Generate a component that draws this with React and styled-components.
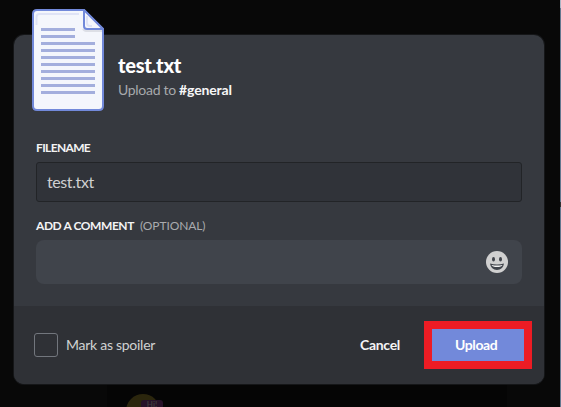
import React from "react";
import styled, { createGlobalStyle } from "styled-components";

const Global = createGlobalStyle`
  * { box-sizing: border-box; }
  body { margin: 0; background: #080808; font-family: Lato, "Noto Sans", sans-serif; }
  button { font-family: inherit; }
`;

const Screen = styled.main`
  position: relative;
  width: 561px;
  height: 407px;
  overflow: hidden;
  padding: 35px 0 0 14px;
  background: #080808;
`;

const WindowEdge = styled.div`
  position: absolute;
  right: 0;
  top: 0;
  width: 1px;
  height: 407px;
  background: linear-gradient(#a9b4c4 0 8px, #64788f 8px 202px, #303030 202px 207px, #64788f 207px);
`;

const Backdrop = styled.div`
  position: absolute;
  left: 107px;
  top: 384px;
  width: 400px;
  height: 23px;
  background: #050505;
  overflow: hidden;
`;

const Avatar = styled.div`
  position: absolute;
  left: 19px;
  top: 10px;
  width: 34px;
  height: 34px;
  border-radius: 50%;
  background: #2b260d;
`;

const Badge = styled.span`
  position: absolute;
  left: 34px;
  top: 16px;
  width: 22px;
  height: 9px;
  border-radius: 3px;
  background: #271229;
  color: #3f3a3d;
  font-size: 8px;
  line-height: 9px;
  font-weight: 700;
  text-align: center;
`;

const Modal = styled.section`
  position: relative;
  width: 530px;
  height: 349px;
  border-radius: 10px;
  background: #36393f;
  display: flex;
  flex-direction: column;
  box-shadow: 0 0 0 1px #151618;
`;

const Header = styled.header`
  height: 99px;
  padding: 18px 0 0 104px;
`;

const FileIcon = styled.svg`
  position: absolute;
  left: 14px;
  top: -30px;
`;

const Text = styled.span`
  display: block;
  white-space: pre;
  font-size: ${(p) => p.$size}px;
  line-height: ${(p) => p.$line}px;
  font-weight: ${(p) => p.$weight || 400};
  letter-spacing: ${(p) => p.$track || 0}px;
  color: ${(p) => p.$color || "#fff"};
`;

const Channel = styled.strong`
  color: #f6f6f7;
  font-weight: 700;
  letter-spacing: -0.15px;
`;

const Fields = styled.div`
  flex: 1;
  padding: 5px 22px 0;
`;

const LabelRow = styled.div`
  display: flex;
  gap: 6px;
  height: 18px;
`;

const NameField = styled.div`
  height: 40px;
  margin: 5px 0 15px;
  padding: 9px 10px;
  border: 1px solid #222427;
  border-radius: 3px;
  background: #303339;
`;

const CommentField = styled.div`
  height: 44px;
  margin-top: 5px;
  padding-right: 14px;
  border-radius: 8px;
  background: #40444b;
  display: flex;
  justify-content: flex-end;
  align-items: center;
`;

const Footer = styled.footer`
  height: 78px;
  padding: 0 12px 0 20px;
  border-radius: 0 0 10px 10px;
  background: #2f3136;
  display: flex;
  align-items: center;
`;

const Checkbox = styled.span`
  width: 24px;
  height: 24px;
  margin-right: 8px;
  border: 1px solid #72767d;
  border-radius: 3px;
`;

const Spacer = styled.div`
  flex: 1;
`;

const UploadButton = styled.button`
  width: 108px;
  height: 48px;
  margin: 0 0 0 24px;
  padding: 0 0 0 23px;
  border: 8px solid #ed1c24;
  background: #7289da;
  text-align: left;
`;

const rows = [42, 49, 56, 63, 70, 77, 84, 91];

export default function App() {
  return (
    <Screen>
      <Global />
      <Backdrop>
        <Avatar />
        <Badge>Hi!</Badge>
      </Backdrop>
      <WindowEdge />
      <Modal>
        <FileIcon width="78" height="108" viewBox="28 5 78 108">
          <path d="M37 10H84L103 29V106Q103 110 99 110H37Q33 110 33 106V14Q33 10 37 10Z" fill="#f4f6fc" stroke="#7289da" strokeWidth="2" />
          <path d="M36.500 25V17Q36.500 14 39.500 14H79" fill="none" stroke="#dfe3f6" strokeWidth="2" />
          <path d="M83 29Q84 31 88 31H102" fill="none" stroke="#dddfe6" strokeWidth="2" />
          <path d="M84 10V26Q84 29 87 29H103Z" fill="#f4f6fc" stroke="#7289da" strokeWidth="2" strokeLinejoin="round" />
          <path d="M87 16V23Q87 26 90 26H92" fill="none" stroke="#dfe3f6" strokeWidth="2" />
          <path d="M41 28h34v3H41zM41 35h34v3H41z" fill="#a3aedd" />
          {rows.map((y) => (
            <rect key={y} x="41" y={y} width="54" height="3" fill="#a3aedd" />
          ))}
        </FileIcon>
        <Header>
          <Text $size={20} $line={25} $weight={900} $track={-0.25}>test.txt</Text>
          <Text $size={14} $line={24} $color="#a7a9ac" $track={-0.3}>
            Upload to <Channel>#general</Channel>
          </Text>
        </Header>
        <Fields>
          <LabelRow>
            <Text $size={12} $line={18} $weight={700} $color="#f3f3f4" $track={-0.65}>FILENAME</Text>
          </LabelRow>
          <NameField>
            <Text $size={16} $line={20} $color="#cfd0d1" $track={-0.4}>test.txt</Text>
          </NameField>
          <LabelRow>
            <Text $size={12} $line={18} $weight={700} $color="#f3f3f4" $track={-0.42}>ADD A COMMENT</Text>
            <Text $size={12} $line={18} $color="#aaabae" $track={-0.1}>(OPTIONAL)</Text>
          </LabelRow>
          <CommentField>
            <svg width="22" height="22" viewBox="0 0 22 22">
              <circle cx="11" cy="11" r="11" fill="#d0d0d0" />
              <ellipse cx="7.500" cy="8.300" rx="1.500" ry="2.300" fill="#40444b" />
              <ellipse cx="14.500" cy="8.300" rx="1.500" ry="2.300" fill="#40444b" />
              <path d="M4 12.500Q11 14.500 18 12.500Q17 19 11 19T4 12.500Z" fill="#40444b" />
              <path d="M5.500 14Q11 15.200 16.500 14Q15.500 16 11 16T5.500 14Z" fill="#f4f4f4" />
            </svg>
          </CommentField>
        </Fields>
        <Footer>
          <Checkbox />
          <Text $size={14} $line={20} $color="#d0d1d2" $track={-0.27}>Mark as spoiler</Text>
          <Spacer />
          <Text $size={14} $line={20} $weight={700} $color="#f4f4f5" $track={-0.3}>Cancel</Text>
          <UploadButton>
            <Text $size={14} $line={20} $weight={700} $track={-0.4}>Upload</Text>
          </UploadButton>
        </Footer>
      </Modal>
    </Screen>
  );
}
